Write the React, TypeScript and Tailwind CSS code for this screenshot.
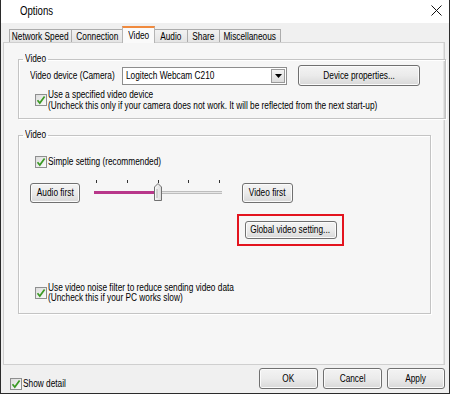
import React from "react";

// the dialog font is a narrow one; squeeze Liberation Sans to match
function T({ children, center }: { children: React.ReactNode; center?: boolean }) {
  return (
    <span
      className={`inline-block whitespace-nowrap scale-x-[0.83] ${center ? "origin-center" : "origin-left"}`}
    >
      {children}
    </span>
  );
}

function Check() {
  return (
    <span className="flex h-[12px] w-[12px] shrink-0 items-center justify-center border border-[#8e8f8f] bg-gradient-to-br from-[#dcdcdc] to-[#fbfbfb]">
      <svg width="10" height="10" viewBox="0 0 10 10">
        <path d="M1.5 5.2 L3.8 8 L8.6 1.6" fill="none" stroke="#3b9a24" strokeWidth="1.7" />
      </svg>
    </span>
  );
}

function Btn({ label, className }: { label: string; className: string }) {
  return (
    <div
      className={`flex items-center justify-center rounded-[3px] border border-[#707070] bg-gradient-to-b from-[#f3f3f3] via-[#ebebeb] to-[#d8d8d8] leading-none text-black shadow-[inset_0_0_0_1px_#fbfbfb] ${className}`}
    >
      <T center>{label}</T>
    </div>
  );
}

const tabs = [
  { label: "Network Speed", w: "w-[63px]" },
  { label: "Connection", w: "w-[53px]" },
  { label: "Video", w: "w-[33px]", active: true },
  { label: "Audio", w: "w-[34px]" },
  { label: "Share", w: "w-[33px]" },
  { label: "Miscellaneous", w: "w-[62px]" },
];

export default function App() {
  return (
    <div className="flex h-[394px] w-[450px] flex-col border-x border-b border-[#2b2b2b] bg-[#f0f0f0] font-['Liberation_Sans',sans-serif] text-[10px] text-black">
      {/* Title bar */}
      <div className="flex h-[23px] shrink-0 items-center justify-between bg-white pl-[19px] pr-[6px]">
        <span className="-mt-[2px] inline-block origin-left scale-x-[0.8] text-[12px]">Options</span>
        <svg width="11" height="11" viewBox="0 0 11 11" className="mr-[1px] -mt-[2px]">
          <path d="M0.5 0.5 L10.5 10.5 M10.5 0.5 L0.5 10.5" stroke="#111" strokeWidth="1" />
        </svg>
      </div>

      {/* Tabs */}
      <div className="mt-[3px] flex h-[17px] shrink-0 items-end pl-[8px]">
        {tabs.map((t) =>
          t.active ? (
            <div
              key={t.label}
              className={`relative z-10 -mx-px flex h-[17px] items-center justify-center border-x border-[#b5b5b5] border-t-2 border-t-[#f08a3e] bg-[#fafafa] pb-[1px] ${t.w}`}
            >
              <T center>{t.label}</T>
            </div>
          ) : (
            <div
              key={t.label}
              className={`-mr-px flex h-[14px] items-center justify-center border border-b-0 border-[#acacac] bg-gradient-to-b from-[#f2f2f2] to-[#e3e3e3] ${t.w}`}
            >
              <T center>{t.label}</T>
            </div>
          )
        )}
      </div>

      {/* Panel */}
      <div className="ml-[2px] -mt-px flex h-[323px] w-[442px] shrink-0 flex-col border border-[#cfcfcf] bg-[#f6f6f6] shadow-[inset_-1px_0_0_#e4e4e4]">
        {/* Group 1 */}
        <fieldset className="ml-[14px] mt-[10px] h-[66px] w-[413px] border border-[#c4c4c4] p-0 shadow-[inset_1px_1px_0_#fff,1px_1px_0_#fff]">
          <legend className="ml-[4px] w-[25px] px-[2px] leading-[12px]">
            <T>Video</T>
          </legend>
          <div className="flex h-[21px] items-center">
            <span className="ml-[11px] w-[92px]">
              <T>Video device (Camera)</T>
            </span>
            <div className="flex h-[18px] w-[165px] items-center border border-[#8d8d8d] bg-white pl-[3px]">
              <span className="flex-1">
                <T>Logitech Webcam C210</T>
              </span>
              <div className="mr-[1px] flex h-[14px] w-[14px] items-center justify-center border border-[#9a9a9a] bg-gradient-to-b from-[#f4f4f4] to-[#dcdcdc]">
                <svg width="7" height="4" viewBox="0 0 7 4">
                  <path d="M0 0 H7 L3.5 4 Z" fill="#000" />
                </svg>
              </div>
            </div>
            <Btn label="Device properties..." className="ml-[11px] h-[21px] w-[122px]" />
          </div>
          <div className="mt-[3px] flex items-center gap-[1px] pl-[16px]">
            <Check />
            <div className="leading-[11px]">
              <div>
                <T>Use a specified video device</T>
              </div>
              <div>
                <T>(Uncheck this only if your camera does not work. It will be reflected from the next start-up)</T>
              </div>
            </div>
          </div>
        </fieldset>

        {/* Group 2 */}
        <fieldset className="ml-[14px] mt-[10px] flex h-[185px] w-[413px] flex-col border border-[#c4c4c4] p-0 shadow-[inset_1px_1px_0_#fff,1px_1px_0_#fff]">
          <legend className="ml-[4px] w-[25px] px-[2px] leading-[12px]">
            <T>Video</T>
          </legend>
          <div className="mt-[13px] flex items-center gap-[1px] pl-[16px]">
            <Check />
            <T>Simple setting (recommended)</T>
          </div>

          <div className="mt-[11px] flex items-end pl-[11px]">
            <Btn label="Audio first" className="h-[20px] w-[50px]" />
            <div className="ml-[14px] flex w-[128px] flex-col">
              <div className="flex h-[3px] justify-between px-[2px]">
                {[0, 1, 2, 3, 4].map((i) => (
                  <span key={i} className="h-[3px] w-px bg-[#333]" />
                ))}
              </div>
              <div className="relative h-[20px]">
                <div className="absolute left-0 top-[8px] flex h-[3px] w-full">
                  <div className="w-[62px] bg-[#b8378a]" />
                  <div className="flex-1 border-y border-[#bdbdbd] bg-[#e6e6e6]" />
                </div>
                <svg className="absolute left-[60px] top-0" width="8" height="18" viewBox="0 0 8 18">
                  <defs>
                    <linearGradient id="th" x1="0" x2="1">
                      <stop offset="0" stopColor="#fafafa" />
                      <stop offset="1" stopColor="#dadada" />
                    </linearGradient>
                  </defs>
                  <path d="M0.5 4 L4 0.5 L7.5 4 V17.5 H0.5 Z" fill="url(#th)" stroke="#707070" />
                  <path d="M3 6 V15" stroke="#b0b0b0" />
                </svg>
              </div>
            </div>
            <Btn label="Video first" className="ml-[20px] h-[20px] w-[51px]" />
          </div>

          <div className="ml-[218px] mt-[11px] flex h-[32px] w-[107px] items-center justify-center border-2 border-[#e3141e]">
            <Btn label="Global video setting..." className="h-[18px] w-[92px]" />
          </div>

          <div className="mt-[37px] flex items-center gap-[1px] pl-[16px]">
            <Check />
            <div className="leading-[10px]">
              <div>
                <T>Use video noise filter to reduce sending video data</T>
              </div>
              <div>
                <T>(Uncheck this if your PC works slow)</T>
              </div>
            </div>
          </div>
        </fieldset>
      </div>

      {/* Bottom bar */}
      <div className="flex flex-1 items-start">
        <div className="ml-[9px] mt-[11px] flex items-center gap-[1px]">
          <Check />
          <T>Show detail</T>
        </div>
        <div className="ml-auto mr-[4px] mt-[3px] flex gap-[5px]">
          <Btn label="OK" className="h-[21px] w-[59px]" />
          <Btn label="Cancel" className="h-[21px] w-[59px]" />
          <Btn label="Apply" className="h-[21px] w-[58px]" />
        </div>
      </div>
    </div>
  );
}
